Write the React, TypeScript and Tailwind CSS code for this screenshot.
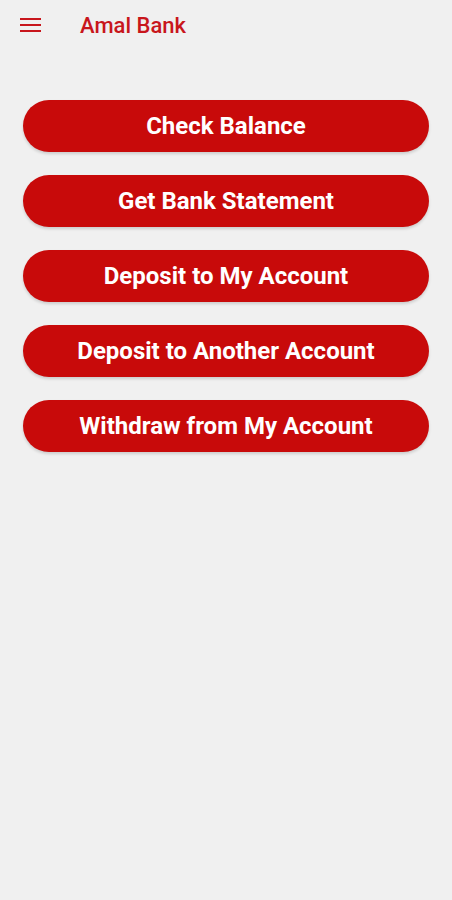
export default function App() {
  const actions = [
    "Check Balance",
    "Get Bank Statement",
    "Deposit to My Account",
    "Deposit to Another Account",
    "Withdraw from My Account",
  ];

  return (
    <div className="min-h-[900px] w-full bg-[#f0f0f0] font-['Roboto',sans-serif]">
      <header className="flex h-[50px] items-center">
        <button className="ml-[20px] flex h-[14px] w-[21px] flex-col justify-between">
          <span className="block h-[2px] w-full bg-[#c8161c]" />
          <span className="block h-[2px] w-full bg-[#c8161c]" />
          <span className="block h-[2px] w-full bg-[#c8161c]" />
        </button>
        <h1 className="ml-[39px] text-[22px] font-medium text-[#c8161c]">Amal Bank</h1>
      </header>

      <div className="flex flex-col gap-[23px] px-[23px] pt-[50px]">
        {actions.map((a) => (
          <button
            key={a}
            className="h-[52px] w-full rounded-full bg-[#c80a0a] text-[24px] font-bold text-white shadow-[0_2px_3px_rgba(0,0,0,0.15)]"
          >
            {a}
          </button>
        ))}
      </div>
    </div>
  );
}
